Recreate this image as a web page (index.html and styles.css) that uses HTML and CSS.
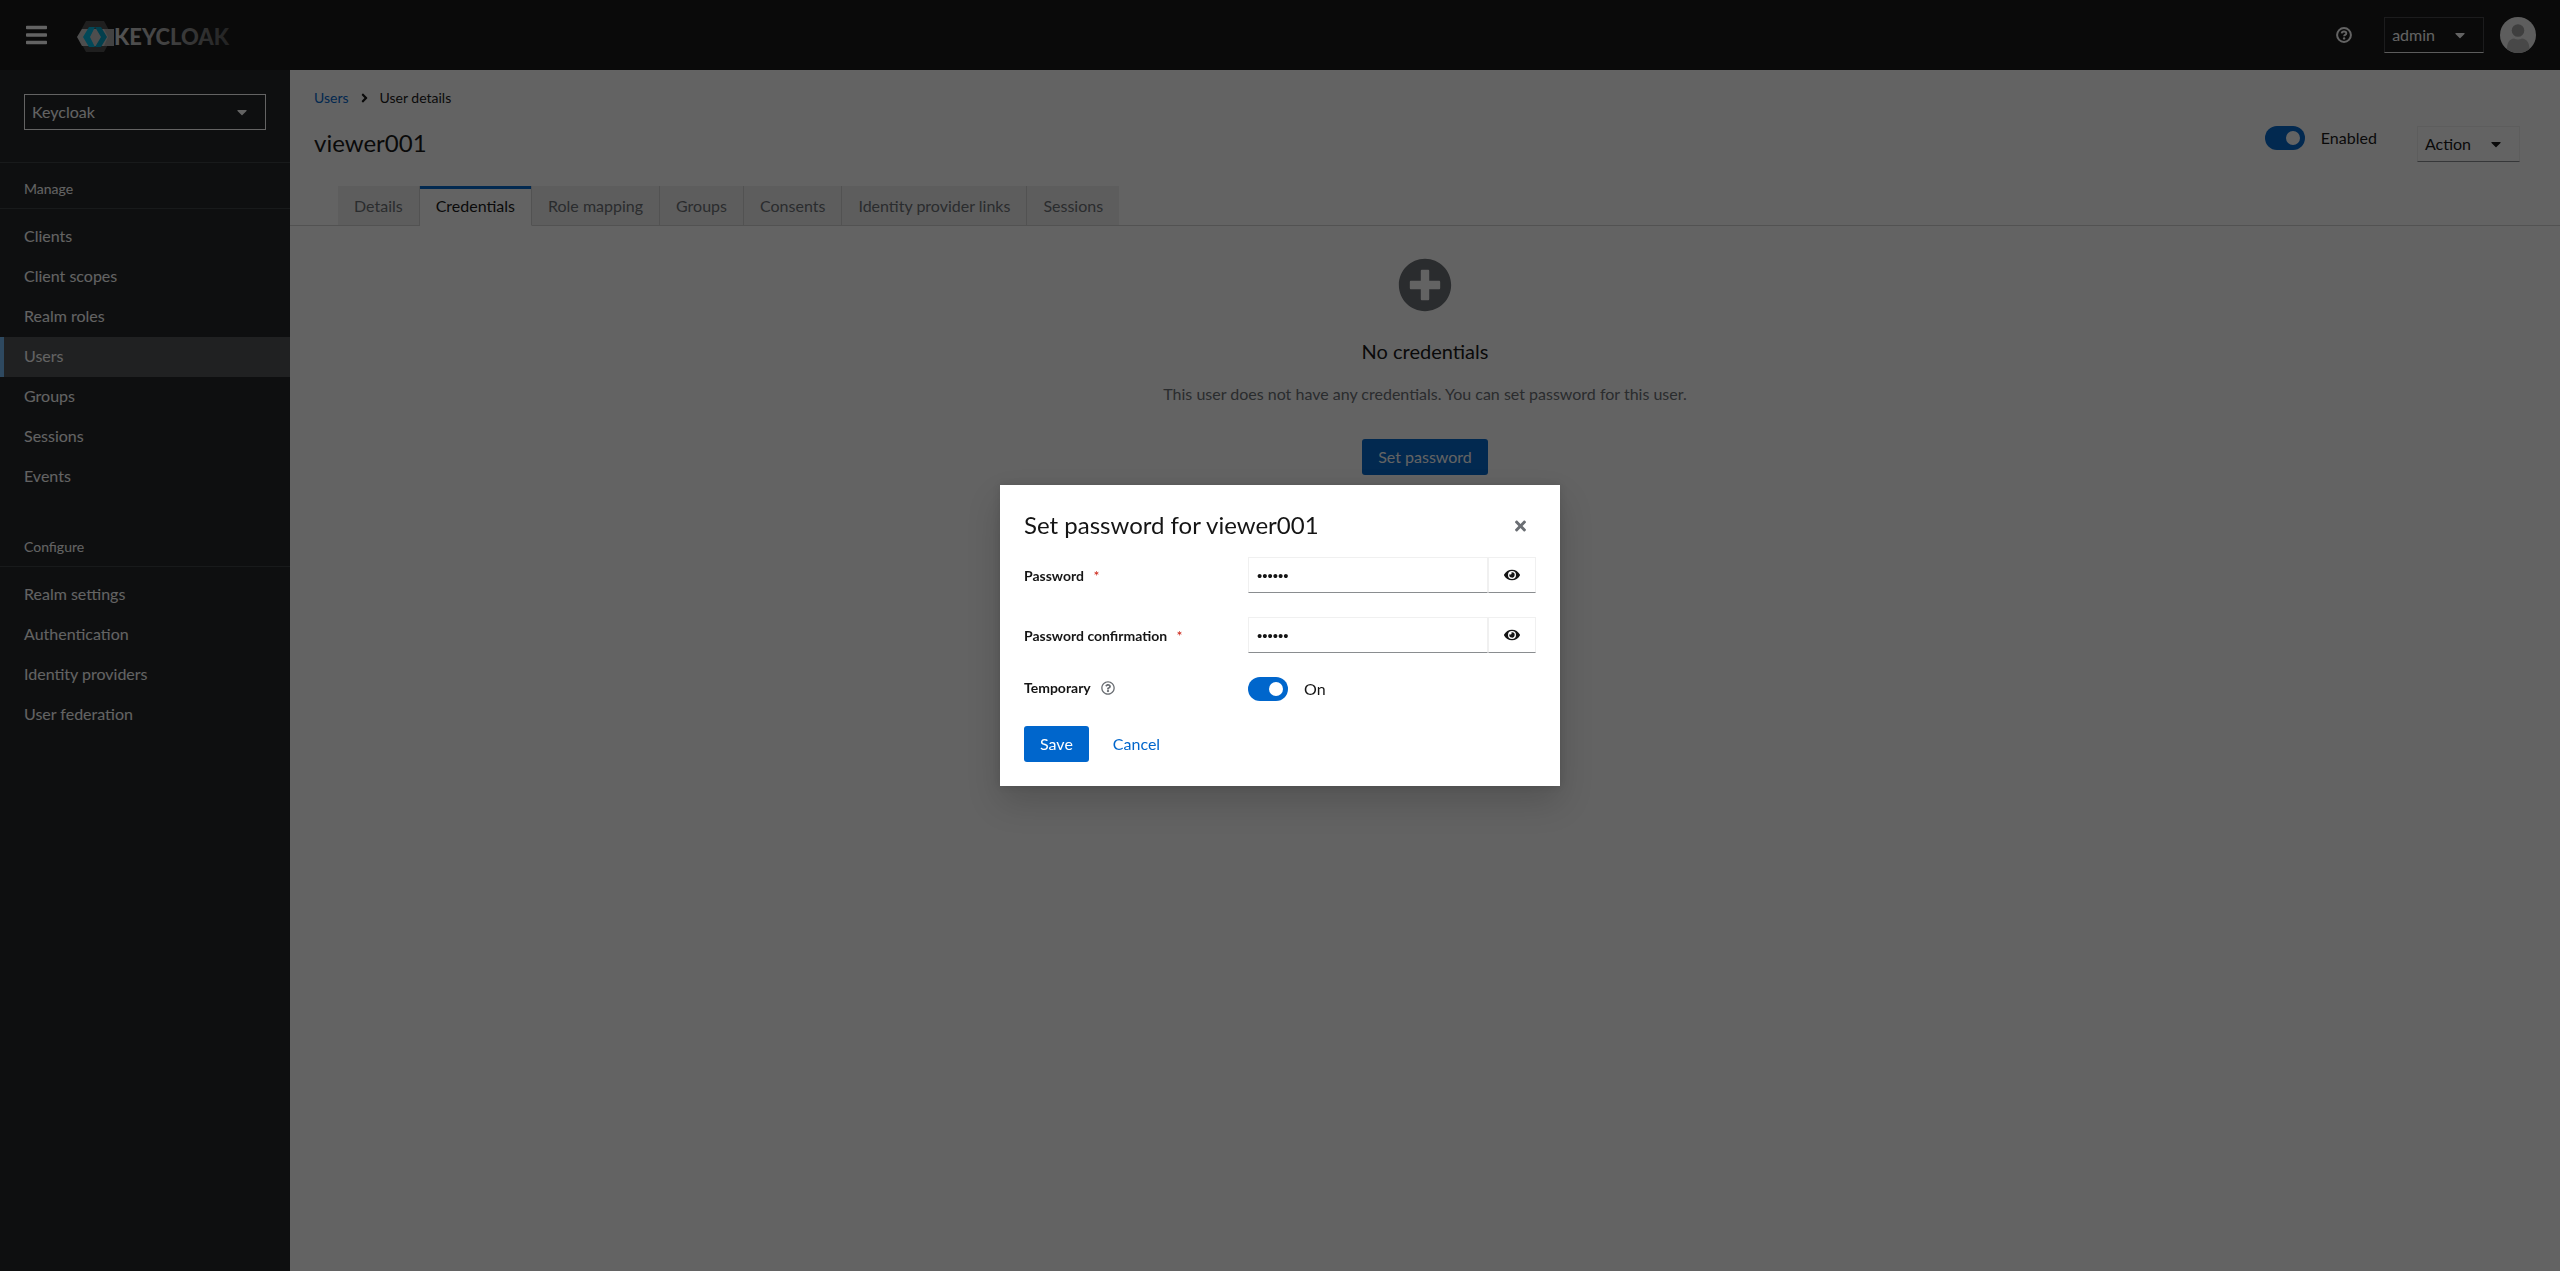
FILE: index.html
```
<!DOCTYPE html>
<html lang="en">
<head>
    <meta charset="utf-8">
    <title>Keycloak Administration Console</title>
    <meta name="viewport" content="width=device-width, initial-scale=1">
    <link rel="stylesheet" href="styles.css">
</head>
<body>
    <svg class="sprite" aria-hidden="true">
        <symbol id="caret" viewBox="0 0 320 512"><path d="M31.3 192h257.3c17.8 0 26.7 21.5 14.1 34.1L174.1 354.8c-7.8 7.8-20.5 7.8-28.3 0L17.2 226.1C4.6 213.5 13.5 192 31.3 192z"/></symbol>
        <symbol id="eye" viewBox="0 0 576 512"><path d="M572.52 241.4C518.29 135.59 410.93 64 288 64S57.68 135.64 3.48 241.41a32.35 32.35 0 0 0 0 29.19C57.71 376.41 165.07 448 288 448s230.32-71.64 284.52-177.41a32.35 32.35 0 0 0 0-29.19zM288 400a144 144 0 1 1 144-144 143.93 143.93 0 0 1-144 144zm0-240a95.31 95.31 0 0 0-25.31 3.79 47.85 47.85 0 0 1-66.9 66.9A95.78 95.78 0 1 0 288 160z"/></symbol>
        <symbol id="help" viewBox="0 0 16 16"><circle cx="8" cy="8" r="6.9" fill="none" stroke="currentColor" stroke-width="2"/><path d="M5.7 6.4C5.8 5.2 6.700 4.500 8 4.500c1.400 0 2.300.8 2.300 1.900 0 1.500-2.200 1.500-2.200 2.900" fill="none" stroke="currentColor" stroke-width="1.900"/><circle cx="8.100" cy="11.400" r="1.200"/></symbol>
        <symbol id="question" viewBox="0 0 512 512"><path d="M256 8C119.043 8 8 119.083 8 256c0 136.997 111.043 248 248 248s248-111.003 248-248C504 119.083 392.957 8 256 8zm0 448c-110.532 0-200-89.431-200-200 0-110.495 89.472-200 200-200 110.491 0 200 89.471 200 200 0 110.53-89.431 200-200 200zm107.244-255.2c0 67.052-72.421 68.084-72.421 92.863V300c0 6.627-5.373 12-12 12h-45.647c-6.627 0-12-5.373-12-12v-8.659c0-35.745 27.1-50.034 47.579-61.516 17.561-9.845 28.324-16.541 28.324-29.579 0-17.246-21.999-28.693-39.784-28.693-23.189 0-33.894 10.977-48.942 29.969-4.057 5.12-11.46 6.071-16.666 2.124l-27.824-21.098c-5.107-3.872-6.251-11.066-2.644-16.363C184.846 131.491 214.94 112 261.794 112c49.071 0 101.45 38.304 101.45 88.8zM298 368c0 23.159-18.841 42-42 42s-42-18.841-42-42 18.841-42 42-42 42 18.841 42 42z"/></symbol>
    </svg>

    <div class="page">
        <header class="masthead">
            <button type="button" class="icon-button menu-toggle" aria-label="Global navigation">
                <svg width="21" height="24" viewBox="0 0 448 512"><path d="M16 132h416c8.837 0 16-7.163 16-16V76c0-8.837-7.163-16-16-16H16C7.163 60 0 67.163 0 76v40c0 8.837 7.163 16 16 16zm0 160h416c8.837 0 16-7.163 16-16v-40c0-8.837-7.163-16-16-16H16c-8.837 0-16 7.163-16 16v40c0 8.837 7.163 16 16 16zm0 160h416c8.837 0 16-7.163 16-16v-40c0-8.837-7.163-16-16-16H16c-8.837 0-16 7.163-16 16v40c0 8.837 7.163 16 16 16z"/></svg>
            </button>
            <a href="#" class="brand" aria-label="Keycloak">
                <svg width="156" height="32" viewBox="0 0 156 32">
                    <defs>
                        <linearGradient id="fade" gradientUnits="userSpaceOnUse" x1="37" y1="0" x2="152" y2="0">
                            <stop offset="0" stop-color="#d8d8d8"/>
                            <stop offset=".45" stop-color="#a8a8a8"/>
                            <stop offset="1" stop-color="#585858"/>
                        </linearGradient>
                    </defs>
                    <path d="M9 0h18l8.500 15.500L27 31H9L.5 15.500z" fill="#4d4d4d"/>
                    <path d="M5 8h32v17H5L0 16z" fill="#c8c8c8"/>
                    <path d="M27 8h10v17H27l4-9z" fill="#a8a8a8"/>
                    <path d="M18 6h-6L6 16l6 10h6l-5-10z" fill="#00b8e3"/>
                    <path d="M18 6h6l6 10-6 10h-6l6-10z" fill="#00a0c6"/>
                    <text x="37" y="24" fill="url(#fade)">KEYCLOAK</text>
                </svg>
            </a>
            <div class="masthead-tools">
                <button type="button" class="icon-button help-button" aria-label="Help"><svg width="16" height="16"><use href="#help"/></svg></button>
                <button type="button" class="dropdown dropdown-dark" aria-haspopup="true">admin <svg width="10" height="16"><use href="#caret"/></svg></button>
                <svg class="avatar" width="36" height="36" viewBox="0 0 36 36" role="img" aria-label="Avatar">
                    <circle cx="18" cy="18" r="18" fill="#f0f0f0"/>
                    <circle cx="18" cy="13.500" r="6.300" fill="#a0a0a0"/>
                    <path d="M7 32c0-6.500 2.500-10 7-10.500 2.500 1.300 5.500 1.300 8 0 4.500.5 7.500 4 7.500 10.500A18 18 0 0 1 7 32z" fill="#b8b8b8"/>
                </svg>
            </div>
        </header>

        <aside class="sidebar">
            <div class="realm">
                <select class="realm-select" aria-label="Realm">
                    <option>Keycloak</option>
                </select>
                <svg class="realm-caret" width="10" height="16"><use href="#caret"/></svg>
            </div>
            <nav class="nav" aria-label="Global">
                <section>
                    <h2>Manage</h2>
                    <ul>
                        <li><a href="#">Clients</a></li>
                        <li><a href="#">Client scopes</a></li>
                        <li><a href="#">Realm roles</a></li>
                        <li><a href="#" class="current">Users</a></li>
                        <li><a href="#">Groups</a></li>
                        <li><a href="#">Sessions</a></li>
                        <li><a href="#">Events</a></li>
                    </ul>
                </section>
                <section>
                    <h2>Configure</h2>
                    <ul>
                        <li><a href="#">Realm settings</a></li>
                        <li><a href="#">Authentication</a></li>
                        <li><a href="#">Identity providers</a></li>
                        <li><a href="#">User federation</a></li>
                    </ul>
                </section>
            </nav>
        </aside>

        <main class="main">
            <div class="page-header">
                <nav class="breadcrumb" aria-label="Breadcrumb">
                    <a href="#">Users</a>
                    <svg width="7" height="14" viewBox="0 0 256 512"><path d="M224.3 273l-136 136c-9.400 9.400-24.600 9.400-33.900 0l-22.600-22.600c-9.400-9.400-9.400-24.600 0-33.900l96.400-96.400-96.400-96.400c-9.400-9.400-9.400-24.600 0-33.900L54.300 103c9.400-9.400 24.600-9.400 33.900 0l136 136c9.500 9.400 9.500 24.600.1 34z"/></svg>
                    <span>User details</span>
                </nav>
                <div class="title-row">
                    <h1>viewer001</h1>
                    <label class="switch"><input type="checkbox" checked> Enabled</label>
                    <button type="button" class="dropdown" aria-haspopup="true">Action <svg width="10" height="16"><use href="#caret"/></svg></button>
                </div>
            </div>

            <div class="tabs" role="tablist">
                <button type="button" role="tab">Details</button>
                <button type="button" role="tab" class="active" aria-selected="true">Credentials</button>
                <button type="button" role="tab">Role mapping</button>
                <button type="button" role="tab">Groups</button>
                <button type="button" role="tab">Consents</button>
                <button type="button" role="tab">Identity provider links</button>
                <button type="button" role="tab">Sessions</button>
            </div>

            <div class="empty-state">
                <svg width="54" height="54" viewBox="0 0 512 512"><path d="M256 8C119 8 8 119 8 256s111 248 248 248 248-111 248-248S393 8 256 8zm144 276c0 6.600-5.400 12-12 12h-92v92c0 6.600-5.400 12-12 12h-56c-6.600 0-12-5.400-12-12v-92h-92c-6.600 0-12-5.400-12-12v-56c0-6.600 5.400-12 12-12h92v-92c0-6.600 5.400-12 12-12h56c6.600 0 12 5.400 12 12v92h92c6.600 0 12 5.400 12 12v56z"/></svg>
                <h2>No credentials</h2>
                <p>This user does not have any credentials. You can set password for this user.</p>
                <button type="button" class="button primary">Set password</button>
            </div>
        </main>
    </div>

    <div class="backdrop">
        <div class="modal" role="dialog" aria-modal="true" aria-labelledby="modal-title">
            <div class="modal-header">
                <h1 id="modal-title">Set password for viewer001</h1>
                <button type="button" class="icon-button close" aria-label="Close">
                    <svg width="11" height="16" viewBox="0 0 352 512"><path d="M242.72 256l100.070-100.070c12.280-12.280 12.280-32.190 0-44.480l-22.240-22.240c-12.280-12.280-32.190-12.280-44.480 0L176 189.280 75.930 89.210c-12.280-12.280-32.190-12.280-44.480 0L9.210 111.450c-12.280 12.280-12.280 32.190 0 44.480L109.280 256 9.210 356.070c-12.280 12.280-12.280 32.190 0 44.480l22.240 22.240c12.280 12.280 32.200 12.280 44.480 0L176 322.720l100.070 100.070c12.280 12.280 32.200 12.280 44.480 0l22.240-22.240c12.280-12.280 12.280-32.190 0-44.480L242.720 256z"/></svg>
                </button>
            </div>
            <form class="form">
                <div class="form-row">
                    <label for="password">Password <span class="required">*</span></label>
                    <div class="input-group">
                        <input type="password" id="password" value="viewer">
                        <button type="button" aria-label="Show password"><svg width="16" height="16"><use href="#eye"/></svg></button>
                    </div>
                </div>
                <div class="form-row">
                    <label for="confirmation">Password confirmation <span class="required">*</span></label>
                    <div class="input-group">
                        <input type="password" id="confirmation" value="viewer">
                        <button type="button" aria-label="Show password"><svg width="16" height="16"><use href="#eye"/></svg></button>
                    </div>
                </div>
                <div class="form-row">
                    <div class="label-help">
                        <label for="temporary">Temporary</label>
                        <button type="button" class="icon-button" aria-label="Help for temporary"><svg width="14" height="14"><use href="#question"/></svg></button>
                    </div>
                    <label class="switch"><input type="checkbox" id="temporary" checked> On</label>
                </div>
                <div class="form-actions">
                    <button type="submit" class="button primary">Save</button>
                    <button type="button" class="button link">Cancel</button>
                </div>
            </form>
        </div>
    </div>
</body>
</html>
```
FILE: styles.css
```
:root {
    --text: #151515;
    --muted: #6a6e73;
    --border: #d2d2d2;
    --light: #f0f0f0;
    --blue: #06c;
    --dark: #212427;
}

* { box-sizing: border-box; margin: 0; padding: 0; }

body {
    font-family: Lato, sans-serif;
    font-size: 16px;
    line-height: 24px;
    color: var(--text);
}

h1, h2 { font-weight: 400; }
ul { list-style: none; }
a { color: var(--blue); text-decoration: none; }

button, input, select {
    font: inherit;
    color: inherit;
}

button { cursor: pointer; }

svg {
    display: block;
    flex-shrink: 0;
    fill: currentColor;
}

.sprite {
    position: absolute;
    width: 0;
    height: 0;
}

.page {
    display: grid;
    grid-template-columns: 290px 1fr;
    grid-template-rows: 70px 1fr;
    min-height: 100vh;
}

.icon-button {
    display: flex;
    align-items: center;
    justify-content: center;
    background: none;
    border: none;
}

/* Masthead */
.masthead {
    grid-column: 1 / -1;
    display: flex;
    align-items: center;
    padding: 0 24px;
    background: #151515;
    color: #fff;
}

.menu-toggle {
    width: 24px;
    height: 24px;
}

.brand {
    margin-left: 29px;
    padding-top: 4px;
}

.brand text {
    font-size: 22px;
    font-weight: 900;
}

.masthead-tools {
    display: flex;
    align-items: center;
    gap: 16px;
    margin-left: auto;
}

.help-button { width: 48px; height: 36px; }

.dropdown {
    display: flex;
    align-items: center;
    gap: 20px;
    height: 36px;
    padding: 0 18px 0 7px;
    background: none;
    border: 1px solid var(--light);
    border-bottom-color: #8a8d90;
}

.dropdown-dark {
    border-color: #444548;
    border-bottom-color: #ededed;
}

/* Sidebar */
.sidebar {
    background: var(--dark);
    color: #fff;
}

.realm {
    display: grid;
    align-items: center;
    padding: 24px 24px 32px;
    border-bottom: 1px solid #3c3f42;
}

.realm-select {
    grid-area: 1 / 1;
    height: 36px;
    padding: 0 7px;
    background: none;
    border: 1px solid #fff;
    appearance: none;
}

.realm-caret {
    grid-area: 1 / 1;
    justify-self: end;
    margin-right: 19px;
    pointer-events: none;
}

.nav section { padding-top: 15px; }
.nav section + section { padding-top: 39px; }

.nav h2 {
    padding: 0 24px 9px;
    margin-bottom: 8px;
    border-bottom: 1px solid #3c3f42;
    font-size: 14px;
    line-height: 21px;
}

.nav a {
    display: block;
    padding: 7px 24px 9px;
    color: #fff;
}

.nav .current {
    padding-left: 20px;
    background: #4f5255;
    border-left: 4px solid #73bcf7;
}

/* Content */
.main { background: #fff; }

.page-header { padding: 16px 40px 24px 24px; }

.breadcrumb {
    display: flex;
    align-items: center;
    gap: 12px;
    font-size: 14px;
}

.title-row {
    display: flex;
    align-items: flex-start;
    margin-top: 16px;
}

.title-row h1 {
    margin-right: auto;
    font-size: 24px;
    line-height: 34px;
}

.title-row .switch { margin-right: 40px; }

.switch {
    display: flex;
    align-items: center;
    gap: 16px;
}

.switch input {
    width: 40px;
    height: 24px;
    padding: 5px;
    background: var(--blue);
    border-radius: 12px;
    appearance: none;
}

.switch input::before {
    content: "";
    display: block;
    width: 14px;
    height: 14px;
    margin-left: auto;
    background: #fff;
    border-radius: 50%;
}

.tabs {
    display: flex;
    padding-left: 48px;
    box-shadow: inset 0 -1px var(--border);
}

.tabs button {
    height: 40px;
    padding: 0 16px;
    background: var(--light);
    border: none;
    border-right: 1px solid var(--border);
    border-bottom: 1px solid var(--border);
    color: var(--muted);
}

.tabs button:last-child { border-right: none; }

.tabs .active {
    background: #fff;
    border-bottom-color: #fff;
    box-shadow: inset 0 3px var(--blue);
    color: var(--text);
}

.empty-state {
    display: flex;
    flex-direction: column;
    align-items: center;
    padding: 32px;
    text-align: center;
    color: var(--muted);
}

.empty-state h2 {
    margin: 24px 0 16px;
    font-size: 20px;
    line-height: 30px;
    color: var(--text);
}

.empty-state .button { margin-top: 33px; }

.button {
    height: 36px;
    padding: 0 16px;
    border: none;
    border-radius: 3px;
}

.primary {
    background: var(--blue);
    color: #fff;
}

.link {
    background: none;
    color: var(--blue);
}

/* Modal */
.backdrop {
    position: fixed;
    inset: 0;
    display: flex;
    align-items: center;
    justify-content: center;
    background: rgba(3, 3, 3, 0.62);
}

.modal {
    width: 560px;
    max-width: 100%;
    padding: 24px;
    background: #fff;
    box-shadow: 0 16px 32px rgba(3, 3, 3, 0.16), 0 0 8px rgba(3, 3, 3, 0.1);
}

.modal-header {
    display: flex;
    align-items: flex-start;
    justify-content: space-between;
}

.modal-header h1 {
    font-size: 24px;
    line-height: 31px;
}

.close {
    width: 32px;
    height: 34px;
    color: var(--muted);
}

.form {
    display: grid;
    gap: 24px;
    margin-top: 14px;
}

.form-row {
    display: grid;
    grid-template-columns: 7fr 9fr;
    align-items: center;
}

.form-row > label:first-child,
.label-help {
    font-size: 14px;
    line-height: 21px;
    font-weight: 700;
}

.required {
    margin-left: 6px;
    font-weight: 400;
    color: #c9190b;
}

.label-help {
    display: flex;
    align-items: center;
    align-self: start;
    gap: 10px;
}

.label-help button { color: var(--muted); }

.input-group { display: flex; }

.input-group input,
.input-group button {
    height: 36px;
    background: #fff;
    border: 1px solid var(--light);
    border-bottom-color: #8a8d90;
}

/* Liberation Sans draws a smaller password bullet than Lato */
.input-group input {
    flex: 1;
    min-width: 0;
    padding: 0 8px;
    font-family: "Liberation Sans", sans-serif;
    font-size: 15px;
}

.input-group button {
    display: grid;
    place-items: center;
    width: 48px;
}

.form-actions {
    display: flex;
    gap: 8px;
    padding-top: 1px;
}
```
